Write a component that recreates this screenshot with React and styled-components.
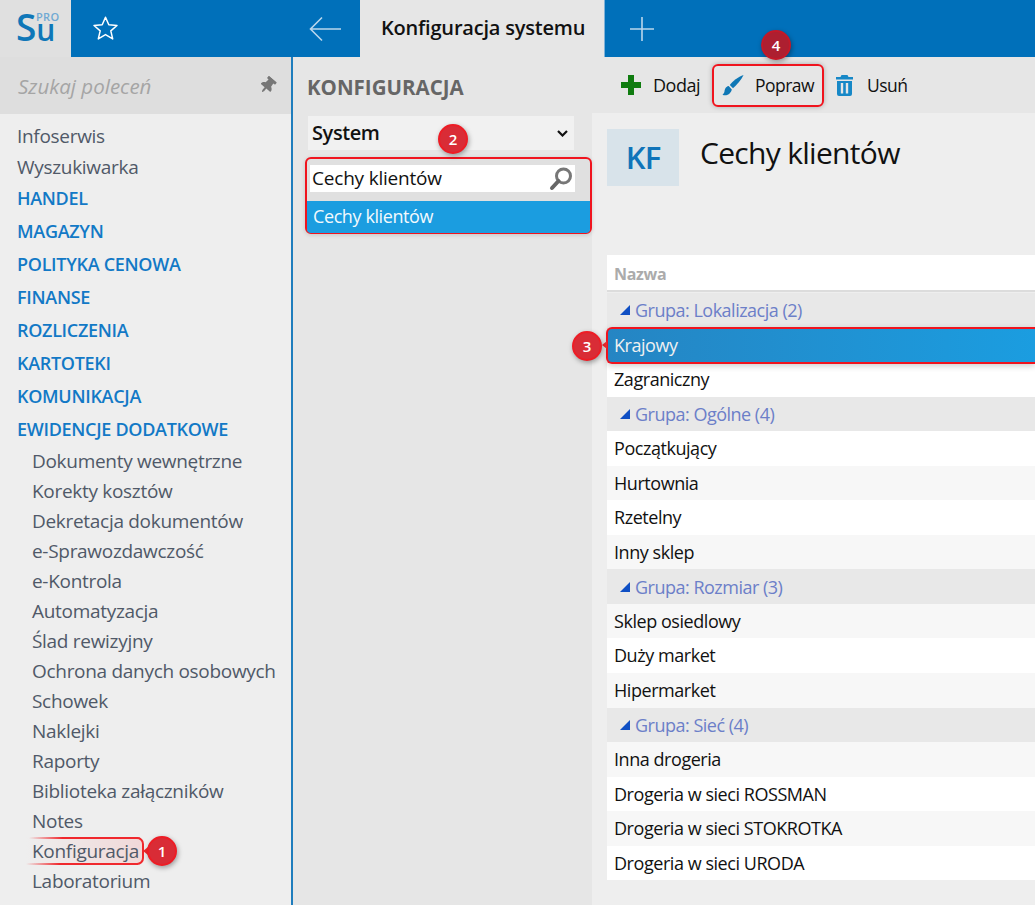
import React from "react";
import styled, { createGlobalStyle } from "styled-components";
import { FaThumbtack } from "react-icons/fa";

const font = `"Open Sans", "Noto Sans", sans-serif`;

const topItems = ["Infoserwis", "Wyszukiwarka"];
const sections = ["HANDEL", "MAGAZYN", "POLITYKA CENOWA", "FINANSE", "ROZLICZENIA", "KARTOTEKI", "KOMUNIKACJA", "EWIDENCJE DODATKOWE"];
const subItems = [
  "Dokumenty wewnętrzne", "Korekty kosztów", "Dekretacja dokumentów", "e-Sprawozdawczość", "e-Kontrola",
  "Automatyzacja", "Ślad rewizyjny", "Ochrona danych osobowych", "Schowek", "Naklejki", "Raporty",
  "Biblioteka załączników", "Notes", "Konfiguracja", "Laboratorium",
];
const groups = [
  { name: "Grupa: Lokalizacja (2)", rows: ["Krajowy", "Zagraniczny"] },
  { name: "Grupa: Ogólne (4)", rows: ["Początkujący", "Hurtownia", "Rzetelny", "Inny sklep"] },
  { name: "Grupa: Rozmiar (3)", rows: ["Sklep osiedlowy", "Duży market", "Hipermarket"] },
  { name: "Grupa: Sieć (4)", rows: ["Inna drogeria", "Drogeria w sieci ROSSMAN", "Drogeria w sieci STOKROTKA", "Drogeria w sieci URODA"] },
];

// stripes run through the whole table, group rows are counted too
const tableRows = [];
groups.forEach((g) => {
  tableRows.push({ name: g.name, group: true });
  g.rows.forEach((r) => tableRows.push({ name: r }));
});

const App = () => (
  <>
    <Global />
    <Page>
      <Header>
        <Logo>
          <LogoS>S</LogoS>
          <LogoU>u</LogoU>
          <LogoPro>PRO</LogoPro>
        </Logo>
        <StarSlot>
          <svg width="27" height="27" viewBox="0 0 27 27" fill="none" stroke="#fff" strokeWidth="1.5" strokeLinejoin="round">
            <path d="M13.5 2.2l3.3 7.6 8.2.7-6.2 5.4 1.9 8-7.2-4.3-7.2 4.3 1.9-8L2 10.5l8.2-.7z" />
          </svg>
        </StarSlot>
        <BackSlot>
          <svg width="32" height="26" viewBox="0 0 32 26" fill="none" stroke="#b9d6ec" strokeWidth="1.6">
            <path d="M32 13H2M13 1.5L1.5 13 13 24.5" />
          </svg>
        </BackSlot>
        <ActiveTab>Konfiguracja systemu</ActiveTab>
        <PlusSlot>
          <svg width="26" height="26" viewBox="0 0 26 26" stroke="#b9d6ec" strokeWidth="1.6">
            <path d="M13 1v24M1 13h24" />
          </svg>
        </PlusSlot>
      </Header>
      <Body>
        <Sidebar>
          <SearchBar>
            <SearchHint>Szukaj poleceń</SearchHint>
            <FaThumbtack size={17} color="#777" style={{ transform: "rotate(40deg)" }} />
          </SearchBar>
          <Nav>
            {topItems.map((t) => <TopItem key={t}>{t}</TopItem>)}
            {sections.map((t) => <Section key={t}>{t}</Section>)}
            <SubList>
              {subItems.map((t) =>
                t === "Konfiguracja" ? (
                  <SubItem key={t}>
                    <ConfigMark>
                      {t}
                      <Notch $side="right" />
                      <Badge $right={-33} $top={-1}>1</Badge>
                    </ConfigMark>
                  </SubItem>
                ) : (
                  <SubItem key={t}>{t}</SubItem>
                )
              )}
            </SubList>
          </Nav>
        </Sidebar>
        <Middle>
          <MiddleTitle>KONFIGURACJA</MiddleTitle>
          <SelectBox>
            System
            <svg width="11" height="7" viewBox="0 0 11 7" fill="none" stroke="#111" strokeWidth="2.2">
              <path d="M1 1l4.500 4.500L10 1" />
            </svg>
          </SelectBox>
          <SearchCallout>
            <Badge $right={122} $top={-35}>2</Badge>
            <SearchField>
              Cechy klientów
              <svg width="24" height="24" viewBox="0 0 24 24" fill="none">
                <circle cx="14.5" cy="9" r="7" stroke="#777" strokeWidth="3" />
                <path d="M9.5 14L3 21" stroke="#666" strokeWidth="4" strokeLinecap="round" />
              </svg>
            </SearchField>
            <ResultRow>Cechy klientów</ResultRow>
          </SearchCallout>
        </Middle>
        <Main>
          <Toolbar>
            <ToolButton>
              <svg width="20" height="20" viewBox="0 0 20 20" fill="#107c10">
                <path d="M7 0h6v7h7v6h-7v7H7v-7H0V7h7z" />
              </svg>
              Dodaj
            </ToolButton>
            <PoprawButton>
              <Badge $right={31} $top={-36} $dark>4</Badge>
              <svg width="22" height="22" viewBox="0 0 24 24" fill="#0f77b5">
                <path d="M23.5 1C18 3 11 8 8.500 12l3.500 3.500C16 12 21 6.500 23.500 1z" />
                <path d="M7.300 13.200C3.500 14 3.200 17 2.700 19 2.300 21 1.300 22 .5 22.500 4 24.300 9.300 22.500 10.700 16.800z" />
              </svg>
              Popraw
            </PoprawButton>
            <TrashButton>
              <svg width="17" height="21" viewBox="0 0 17 21" fill="#1788c7" fillRule="evenodd">
                <path d="M5.500 0h6L12.500 2H17v2.500H0V2h4.500zM1 6h15v13a2 2 0 0 1-2 2H3a2 2 0 0 1-2-2zM4.800 8v10.500h2.400V8zm5 0v10.500h2.400V8z" />
              </svg>
              Usuń
            </TrashButton>
          </Toolbar>
          <Content>
            <TitleRow>
              <Avatar>KF</Avatar>
              <Title>Cechy klientów</Title>
            </TitleRow>
            <Table>
              <HeadRow>Nazwa</HeadRow>
              {tableRows.map((r, i) => {
                if (r.group) {
                  return (
                    <GroupRow key={r.name}>
                      <svg width="10" height="10" viewBox="0 0 10 10" fill="#0f4fc4">
                        <path d="M10 0v10H0z" />
                      </svg>
                      {r.name}
                    </GroupRow>
                  );
                }
                if (r.name === "Krajowy") {
                  return (
                    <SelectedRow key={r.name}>
                      <Notch $side="left" />
                      <Badge $left={-36} $top={2}>3</Badge>
                      {r.name}
                    </SelectedRow>
                  );
                }
                return <Row key={r.name} $grey={i % 2 === 1}>{r.name}</Row>;
              })}
            </Table>
          </Content>
        </Main>
      </Body>
    </Page>
  </>
);

export default App;

const Global = createGlobalStyle`
  html, body { margin: 0; padding: 0; }
  body { font-family: ${font}; overflow: hidden; }
`;

const Page = styled.div`
  width: 1035px;
  height: 905px;
  overflow: hidden;
  display: flex;
  flex-direction: column;
  background: #eee;
`;

const Header = styled.div`
  height: 57px;
  flex: none;
  display: flex;
  background: #0070ba;
`;

const Logo = styled.div`
  width: 71px;
  box-sizing: border-box;
  padding: 2px 0 0 16px;
  position: relative;
  background: #e0e0e0;
  color: #0f77b8;
  line-height: 50px;
`;

const LogoS = styled.span`
  display: inline-block;
  font: 600 37px/50px ${font};
`;

const LogoU = styled.span`
  display: inline-block;
  font: 600 30px/18px ${font};
`;

const LogoPro = styled.span`
  position: absolute;
  left: 36px;
  top: 11px;
  font: 600 11px/12px ${font};
  letter-spacing: 0.3px;
  color: #6fa9d3;
`;

const StarSlot = styled.div`
  width: 68px;
  display: flex;
  align-items: center;
  justify-content: center;
`;

const BackSlot = styled.div`
  width: 221px;
  display: flex;
  align-items: center;
  justify-content: flex-end;
  padding-right: 19px;
  box-sizing: border-box;
`;

const ActiveTab = styled.div`
  width: 245px;
  box-sizing: border-box;
  padding-left: 21px;
  background: #e6e6e6;
  border-right: 1px solid #7fb2d8;
  font: 600 20px/56px ${font};
  letter-spacing: -0.2px;
  color: #111;
`;

const PlusSlot = styled.div`
  width: 74px;
  display: flex;
  align-items: center;
  justify-content: center;
`;

const Body = styled.div`
  flex: 1;
  display: flex;
  min-height: 0;
`;

const Sidebar = styled.div`
  width: 293px;
  flex: none;
  box-sizing: border-box;
  background: #eee;
  border-right: 2px solid #1f7dbd;
`;

const SearchBar = styled.div`
  height: 57px;
  box-sizing: border-box;
  padding: 0 15px 0 18px;
  display: flex;
  align-items: center;
  justify-content: space-between;
  background: #dedede;
`;

const SearchHint = styled.span`
  font: italic 400 20.5px/24px ${font};
  color: #a5a5a5;
`;

const Nav = styled.div`
  padding: 7px 0 0 17px;
`;

const TopItem = styled.div`
  height: 31px;
  font: 400 19px/31px ${font};
  letter-spacing: -0.3px;
  color: #505968;
`;

const Section = styled.div`
  height: 33px;
  font: 600 18px/31px ${font};
  letter-spacing: -0.3px;
  color: #1279c6;
`;

const SubList = styled.div`
  padding-left: 15px;
  margin-top: -1px;
`;

const SubItem = styled.div`
  height: 30px;
  font: 400 19px/30px ${font};
  letter-spacing: -0.3px;
  color: #505968;
`;

// the red callout fades out to the left of the item
const ConfigMark = styled.span`
  position: relative;
  display: inline-block;
  height: 28px;
  line-height: 28px;
  padding: 0 5px 0 6px;
  margin: 1px 0 0 -6px;
  background:
    linear-gradient(90deg, transparent, #f0282d 30%) top / calc(100% - 6px) 2px no-repeat,
    linear-gradient(90deg, transparent, #f0282d 30%) bottom left / calc(100% - 6px) 2px no-repeat,
    linear-gradient(90deg, #eee, #f1d8d8);
  border-radius: 0 7px 7px 0;

  &::after {
    content: "";
    position: absolute;
    top: 0;
    right: 0;
    bottom: 0;
    width: 8px;
    box-sizing: border-box;
    border: 2px solid #f0282d;
    border-left: none;
    border-radius: 0 7px 7px 0;
  }
`;

const Notch = styled.span`
  position: absolute;
  top: 50%;
  ${(p) => (p.$side === "right" ? "right: -4px;" : "left: -6px;")}
  margin-top: -4px;
  width: 0;
  height: 0;
  border-top: 4px solid transparent;
  border-bottom: 4px solid transparent;
  border-right: 5px solid #f0282d;
`;

const Badge = styled.span`
  position: absolute;
  z-index: 2;
  ${(p) => p.$left !== undefined && `left: ${p.$left}px;`}
  ${(p) => p.$right !== undefined && `right: ${p.$right}px;`}
  top: ${(p) => p.$top}px;
  width: 30px;
  height: 30px;
  box-sizing: border-box;
  border: 2px solid ${(p) => (p.$dark ? "#c41828" : "#ee1c25")};
  border-radius: 50%;
  background: ${(p) => (p.$dark ? "#ad1f30" : "#d92c36")};
  color: #fff;
  font: 600 15px/26px ${font};
  letter-spacing: 0;
  text-align: center;
  box-shadow: 1px 2px 5px rgba(0, 0, 0, 0.35);
`;

const Middle = styled.div`
  width: 299px;
  flex: none;
  box-sizing: border-box;
  padding: 0 18px 0 15px;
  background: #e6e6e6;
`;

const MiddleTitle = styled.div`
  height: 59px;
  margin-left: -1px;
  font: 700 20.5px/61px ${font};
  color: #666;
`;

const SelectBox = styled.div`
  height: 34px;
  padding: 0 6px 0 4px;
  display: flex;
  align-items: center;
  justify-content: space-between;
  background: #f1f1f1;
  font: 600 20px/36px ${font};
  letter-spacing: -0.4px;
  color: #111;
`;

const SearchCallout = styled.div`
  position: relative;
  margin: 7px -18px 0 -3px;
  height: 77px;
  box-sizing: border-box;
  padding-top: 6px;
  border: 2px solid #f0141e;
  border-radius: 6px;
  background: #e0e0e0;
  box-shadow: 0 1px 4px rgba(0, 0, 0, 0.15);
`;

const SearchField = styled.div`
  height: 27px;
  margin: 0 15px 0 3px;
  padding: 0 2px 0 2px;
  display: flex;
  align-items: center;
  justify-content: space-between;
  background: #fff;
  font: 400 19px/27px ${font};
  letter-spacing: -0.2px;
  color: #111;
`;

const ResultRow = styled.div`
  height: 32px;
  margin-top: 9px;
  padding-left: 6px;
  background: #1b9de0;
  border-radius: 0 0 4px 4px;
  font: 400 18px/31px ${font};
  letter-spacing: -0.4px;
  color: #f2f9fd;
`;

const Main = styled.div`
  flex: 1;
  min-width: 0;
  background: #eee;
`;

const Toolbar = styled.div`
  height: 56px;
  box-sizing: border-box;
  padding-left: 29px;
  display: flex;
  align-items: center;
  background: #e6e6e6;
`;

const ToolButton = styled.div`
  height: 43px;
  display: flex;
  align-items: center;
  gap: 12px;
  margin-right: 12px;
  font: 400 18px/43px ${font};
  letter-spacing: -0.5px;
  color: #111;
`;

const PoprawButton = styled(ToolButton)`
  position: relative;
  box-sizing: border-box;
  width: 112px;
  padding-left: 8px;
  gap: 11px;
  font-size: 17.5px;
  border: 2px solid #f0141e;
  border-radius: 6px;
  box-shadow: 0 0 5px rgba(0, 0, 0, 0.25);
`;

const TrashButton = styled(ToolButton)`
  gap: 14px;
  font-size: 17.5px;
`;

const Content = styled.div`
  padding: 16px 0 0 15px;
`;

const TitleRow = styled.div`
  height: 126px;
  display: flex;
  align-items: flex-start;
  gap: 21px;
`;

const Avatar = styled.div`
  width: 72px;
  height: 57px;
  background: #d8e3ea;
  color: #0f74b9;
  font: 600 31px/57px ${font};
  letter-spacing: -1px;
  text-align: center;
`;

const Title = styled.div`
  font: 400 30px/48px ${font};
  letter-spacing: -0.7px;
  color: #111;
`;

const Table = styled.div`
  display: flex;
  flex-direction: column;
`;

const HeadRow = styled.div`
  height: 37px;
  box-sizing: border-box;
  margin-bottom: 1px;
  padding-left: 7px;
  background: #fff;
  border-bottom: 2px solid #dcdcdc;
  font: 700 16px/38px ${font};
  letter-spacing: -0.3px;
  color: #ababab;
`;

const GroupRow = styled.div`
  height: 34.55px;
  padding-left: 13px;
  display: flex;
  align-items: center;
  gap: 5px;
  background: #e8e8e8;
  font: 400 18px/34px ${font};
  letter-spacing: -0.5px;
  color: #6c7fc8;
`;

const Row = styled.div`
  height: 34.55px;
  padding-left: 7px;
  background: ${(p) => (p.$grey ? "#f7f7f7" : "#fff")};
  font: 400 18px/35px ${font};
  letter-spacing: -0.45px;
  color: #111;
`;

const SelectedRow = styled.div`
  position: relative;
  z-index: 1;
  height: 37px;
  margin: -1px 0 -1.45px -1px;
  box-sizing: border-box;
  padding-left: 6px;
  border: 2px solid #f0141e;
  border-right: none;
  border-radius: 6px 0 0 6px;
  background: linear-gradient(90deg, #2585c3, #1b9de0);
  font: 400 18px/33px ${font};
  letter-spacing: -0.45px;
  color: #f0f0f0;
  box-shadow: 0 2px 6px rgba(0, 0, 0, 0.2);
`;
